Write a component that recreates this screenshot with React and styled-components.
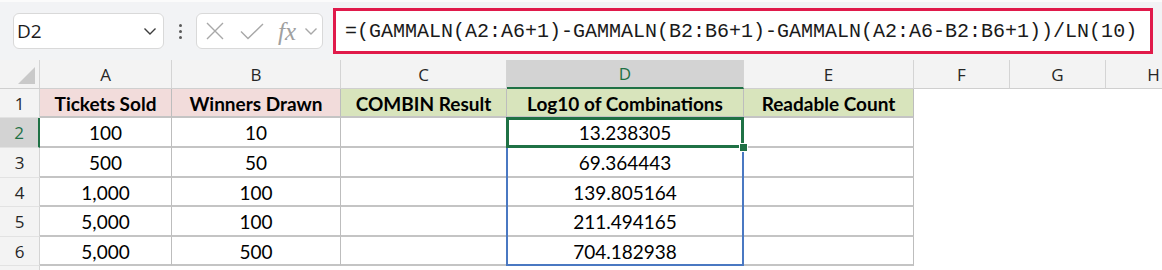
import React from "react"
import styled, { createGlobalStyle } from "styled-components"

const GlobalStyle = createGlobalStyle`
  html, body {
    margin: 0;
    padding: 0;
    background: #ffffff;
    overflow: hidden;
  }
`

const GREEN = "#1f7145"
const BLUE = "#4a78c2"

const columns = [
  { key: "A", width: 132 },
  { key: "B", width: 169 },
  { key: "C", width: 166 },
  { key: "D", width: 237 },
  { key: "E", width: 170 },
  { key: "F", width: 96 },
  { key: "G", width: 96 },
  { key: "H", width: 96 },
]

const headerRow = [
  { text: "Tickets Sold", tone: "pink" },
  { text: "Winners Drawn", tone: "pink" },
  { text: "COMBIN Result", tone: "green" },
  { text: "Log10 of Combinations", tone: "green" },
  { text: "Readable Count", tone: "green" },
]

const rows = [
  ["100", "10", "", "13.238305", ""],
  ["500", "50", "", "69.364443", ""],
  ["1,000", "100", "", "139.805164", ""],
  ["5,000", "100", "", "211.494165", ""],
  ["5,000", "500", "", "704.182938", ""],
]

const rowHeights = [29, 29, 30, 30, 29, 30, 29]
const rowHeaderWidth = 40

const Page = styled.div`
  width: 1162px;
  height: 270px;
  overflow: hidden;
  background: #ffffff;
`

const Toolbar = styled.div`
  height: 60px;
  box-sizing: border-box;
  border-top: 2px solid #fbfbfb;
  background: #f2f3f5;
  display: flex;
  align-items: center;
  padding: 0 9px 0 13px;
`

const Box = styled.div`
  height: 36px;
  box-sizing: border-box;
  background: #ffffff;
  border: 1px solid #d9d9d9;
  border-radius: 6px;
  display: flex;
  align-items: center;
`

const NameBox = styled(Box)`
  width: 151px;
  padding: 0 6px 0 3px;
  justify-content: space-between;
  font-family: "Open Sans", sans-serif;
  font-size: 19px;
  color: #1b1b1b;
`

const Dots = styled.div`
  width: 32px;
  display: flex;
  flex-direction: column;
  align-items: center;
  gap: 3px;
  span {
    width: 3px;
    height: 3px;
    border-radius: 50%;
    background: #5a5a5a;
  }
`

const FxBox = styled(Box)`
  width: 127px;
  padding: 0 3px 0 9px;
  color: #a8a8a8;
`

const IconSlot = styled.span`
  display: flex;
  align-items: center;
  margin-right: ${p => p.$gap || 0}px;
`

const FxText = styled.span`
  font-family: "Liberation Serif", serif;
  font-style: italic;
  font-size: 25px;
  line-height: 1;
  margin-right: 8px;
  color: #a0a0a0;
`

const FormulaBox = styled.div`
  flex: 1;
  margin-left: 10px;
  height: 46px;
  box-sizing: border-box;
  border: 3px solid #e01a4b;
  background: #ffffff;
  display: flex;
  align-items: center;
  padding-left: 9px;
  font-family: "Liberation Mono", monospace;
  font-size: 20px;
  color: #1a1a1a;
  white-space: nowrap;
`

const SheetWrap = styled.div`
  position: relative;
`

const Grid = styled.div`
  display: grid;
  grid-template-columns: ${rowHeaderWidth}px ${columns.map(c => `${c.width}px`).join(" ")};
  grid-template-rows: ${rowHeights.map(h => `${h}px`).join(" ")} 10px;
`

const Corner = styled.div`
  background: #f3f3f3;
  border-right: 1px solid #d4d4d4;
  border-bottom: 1px solid #cfcfcf;
  position: relative;
  &::after {
    content: "";
    position: absolute;
    right: 4px;
    bottom: 4px;
    border-left: 17px solid transparent;
    border-bottom: 17px solid #c9c9c9;
  }
`

const ColHeader = styled.div`
  display: flex;
  align-items: center;
  justify-content: center;
  box-sizing: border-box;
  font-family: "Open Sans", sans-serif;
  font-size: 17px;
  color: ${p => (p.$active ? GREEN : "#262626")};
  background: ${p => (p.$active ? "#d3d3d3" : "#f3f3f3")};
  border-right: 1px solid #d4d4d4;
  border-bottom: ${p => (p.$active ? `2px solid ${GREEN}` : "1px solid #cfcfcf")};
`

const RowHeader = styled.div`
  display: flex;
  align-items: center;
  justify-content: center;
  box-sizing: border-box;
  font-family: "Open Sans", sans-serif;
  font-size: 17px;
  color: ${p => (p.$active ? GREEN : "#262626")};
  background: ${p => (p.$active ? "#d3d3d3" : "#f3f3f3")};
  border-right: ${p => (p.$active ? `2px solid ${GREEN}` : "1px solid #d4d4d4")};
  border-bottom: 1px solid #e2e2e2;
`

const toneBg = { pink: "#f2dcdb", green: "#d8e4bc", none: "#ffffff" }

const Cell = styled.div`
  display: flex;
  align-items: center;
  justify-content: center;
  box-sizing: border-box;
  padding-top: 1px;
  font-family: Lato, "Liberation Sans", sans-serif;
  font-size: 19px;
  font-weight: ${p => (p.$bold ? 700 : 400)};
  color: #000000;
  white-space: nowrap;
  background: ${p => toneBg[p.$tone || "none"]};
  border-right: ${p => (p.$blank ? "none" : "1px solid #bdbdbd")};
  border-bottom: ${p => (p.$blank ? "none" : "2px solid #c4c4c4")};
`

const Range = styled.div`
  position: absolute;
  box-sizing: border-box;
  border: 2px solid ${BLUE};
  pointer-events: none;
`

const ActiveCell = styled.div`
  position: absolute;
  box-sizing: border-box;
  border: 3px solid ${GREEN};
  pointer-events: none;
`

const FillHandle = styled.div`
  position: absolute;
  width: 7px;
  height: 7px;
  background: ${GREEN};
  outline: 1px solid #ffffff;
`

const Chevron = ({ color = "#3d3d3d" }) => (
  <svg width="14" height="9" viewBox="0 0 14 9">
    <path d="M1.5 1.5 L7 7 L12.5 1.5" fill="none" stroke={color} strokeWidth="1.4" />
  </svg>
)

const CrossIcon = () => (
  <svg width="18" height="18" viewBox="0 0 18 18">
    <path d="M1 1 L17 17 M17 1 L1 17" stroke="#a8a8a8" strokeWidth="1.4" fill="none" />
  </svg>
)

const CheckIcon = () => (
  <svg width="24" height="17" viewBox="0 0 24 17">
    <path d="M1 8.5 L8 15.5 L23 1" stroke="#a8a8a8" strokeWidth="1.4" fill="none" />
  </svg>
)

const offsetOf = index =>
  rowHeaderWidth + columns.slice(0, index).reduce((sum, c) => sum + c.width, 0)
const topOf = index => rowHeights.slice(0, index).reduce((sum, h) => sum + h, 0)

const App = () => {
  const dLeft = offsetOf(3)
  const dWidth = columns[3].width
  const d2Top = topOf(2)
  const d2Height = rowHeights[2]
  const rangeHeight = topOf(7) - d2Top

  return (
    <Page>
      <GlobalStyle />
      <Toolbar>
        <NameBox>
          <span>D2</span>
          <Chevron />
        </NameBox>
        <Dots>
          <span />
          <span />
          <span />
        </Dots>
        <FxBox>
          <IconSlot $gap={16}>
            <CrossIcon />
          </IconSlot>
          <IconSlot $gap={14}>
            <CheckIcon />
          </IconSlot>
          <FxText>fx</FxText>
          <Chevron color="#a8a8a8" />
        </FxBox>
        <FormulaBox>=(GAMMALN(A2:A6+1)-GAMMALN(B2:B6+1)-GAMMALN(A2:A6-B2:B6+1))/LN(10)</FormulaBox>
      </Toolbar>

      <SheetWrap>
        <Grid>
          <Corner />
          {columns.map(c => (
            <ColHeader key={c.key} $active={c.key === "D"}>
              {c.key}
            </ColHeader>
          ))}

          <RowHeader>1</RowHeader>
          {headerRow.map(h => (
            <Cell key={h.text} $bold $tone={h.tone}>
              {h.text}
            </Cell>
          ))}
          <Cell $blank />
          <Cell $blank />
          <Cell $blank />

          {rows.map((row, r) => (
            <React.Fragment key={r}>
              <RowHeader $active={r === 0}>{r + 2}</RowHeader>
              {row.map((value, c) => (
                <Cell key={c}>{value}</Cell>
              ))}
              <Cell $blank />
              <Cell $blank />
              <Cell $blank />
            </React.Fragment>
          ))}

          <RowHeader />
        </Grid>

        <Range
          style={{ left: dLeft - 1, top: d2Top - 1, width: dWidth + 1, height: rangeHeight + 1 }}
        />
        <ActiveCell
          style={{ left: dLeft - 1, top: d2Top - 1, width: dWidth + 1, height: d2Height + 1 }}
        />
        <FillHandle style={{ left: dLeft + dWidth - 4, top: d2Top + d2Height - 4 }} />
      </SheetWrap>
    </Page>
  )
}

export default App
